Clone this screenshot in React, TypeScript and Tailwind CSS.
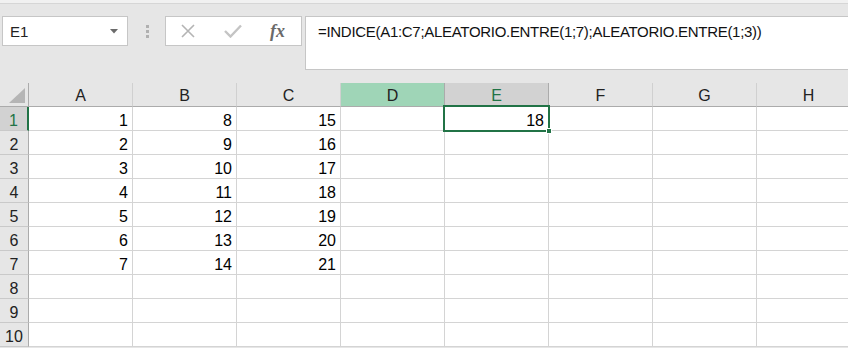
import React from "react";

const cols = ["A", "B", "C", "D", "E", "F", "G", "H"];
const data: Record<number, (number | null)[]> = {
  1: [1, 8, 15, null, 18],
  2: [2, 9, 16],
  3: [3, 10, 17],
  4: [4, 11, 18],
  5: [5, 12, 19],
  6: [6, 13, 20],
  7: [7, 14, 21],
};

export default function App() {
  const rows = Array.from({ length: 10 }, (_, i) => i + 1);
  return (
    <div
      className="w-[848px] h-[348px] overflow-hidden bg-[#e6e6e6] relative"
      style={{ fontFamily: '"Liberation Sans", Arial, sans-serif' }}
    >
      {/* top strip */}
      <div className="h-[4px] bg-[#f1f1f1] border-b border-[#d6d6d6]" />
      {/* toolbar */}
      <div className="h-[79px] flex items-start pt-[12px]">
        <div className="ml-[2px] w-[126px] h-[30px] bg-white border border-[#c6c6c6] flex items-center justify-between pl-[7px] pr-[9px]">
          <span className="text-[15px] text-[#222] leading-none">E1</span>
          <svg width="8" height="5" viewBox="0 0 8 5">
            <path d="M0 0 L8 0 L4 4.5 Z" fill="#6b6b6b" />
          </svg>
        </div>
        <div className="w-[37px] h-[30px] flex flex-col items-center justify-center gap-[2px] pl-[1px]">
          <div className="w-[3px] h-[3px] bg-[#b0b0b0]" />
          <div className="w-[3px] h-[3px] bg-[#b0b0b0]" />
          <div className="w-[3px] h-[3px] bg-[#b0b0b0]" />
        </div>
        <div className="w-[137px] h-[30px] bg-white border border-[#c6c6c6] flex items-center">
          <svg className="ml-[14px]" width="16" height="16" viewBox="0 0 16 16">
            <path d="M2 2 L14 14 M14 2 L2 14" stroke="#b4b4b4" strokeWidth="1.6" fill="none" />
          </svg>
          <svg className="ml-[28px]" width="18" height="14" viewBox="0 0 18 14">
            <path d="M1 7 L6.5 12.5 L17 1.5" stroke="#c4c4c4" strokeWidth="2.4" fill="none" />
          </svg>
          <span
            className="ml-[28px] text-[18px] italic text-[#6a6a6a] leading-none font-bold"
            style={{ fontFamily: '"Liberation Serif", "DejaVu Serif", serif' }}
          >
            fx
          </span>
        </div>
        <div className="ml-[3px] flex-1 h-[54px] bg-white border border-[#c6c6c6] border-r-0 pl-[12px] pt-[3px]">
          <span className="text-[15px] tracking-[-0.3px] text-[#111] leading-none">
            =INDICE(A1:C7;ALEATORIO.ENTRE(1;7);ALEATORIO.ENTRE(1;3))
          </span>
        </div>
      </div>

      {/* sheet grid */}
      <div className="relative">
        <div className="grid grid-cols-[29px_repeat(8,104px)]">
          {/* header row */}
          <div className="h-[24px] bg-[#e6e6e6] border-r border-b border-[#ababab] flex items-end justify-end pr-[3px] pb-[3px]">
            <svg width="16" height="15" viewBox="0 0 16 15">
              <path d="M16 0 L16 15 L0 15 Z" fill="#b5b5b5" />
            </svg>
          </div>
          {cols.map((c) => {
            const isD = c === "D";
            const isE = c === "E";
            return (
              <div
                key={c}
                className={
                  "h-[24px] flex items-center justify-center text-[16px] leading-none border-r " +
                  (isD
                    ? "bg-[#9fd5b7] border-[#ababab] border-b text-[#222]"
                    : isE
                    ? "bg-[#d2d2d2] border-[#ababab] border-b-2 border-b-[#217346] text-[#217346]"
                    : "bg-[#e6e6e6] border-[#d0d0d0] border-b border-b-[#ababab] text-[#222]")
                }
              >
                <span className={isE ? "pt-[3px]" : "pt-[2px]"}>{c}</span>
              </div>
            );
          })}
          {rows.map((r) => (
            <React.Fragment key={r}>
              <div
                className={
                  "h-[24px] flex items-end justify-center pb-[1px] text-[16px] leading-none border-b border-[#c9c9c9] " +
                  (r === 1
                    ? "bg-[#d2d2d2] text-[#217346] border-r-2 border-r-[#217346]"
                    : "bg-[#e6e6e6] text-[#222] border-r border-r-[#ababab]")
                }
              >
                {r}
              </div>
              {cols.map((c, ci) => {
                const v = data[r]?.[ci];
                return (
                  <div
                    key={c}
                    className="h-[24px] bg-white border-r border-b border-[#d4d4d4] flex items-end justify-end pr-[4px] pb-[1px] text-[16px] leading-none text-black"
                  >
                    {v ?? ""}
                  </div>
                );
              })}
            </React.Fragment>
          ))}
        </div>
        {/* selection on E1 */}
        <div className="absolute left-[443px] top-[22px] w-[107px] h-[27px] border-2 border-[#217346] pointer-events-none" />
        <div className="absolute left-[546px] top-[45px] w-[6px] h-[6px] bg-[#217346] border border-white pointer-events-none" />
      </div>
    </div>
  );
}
